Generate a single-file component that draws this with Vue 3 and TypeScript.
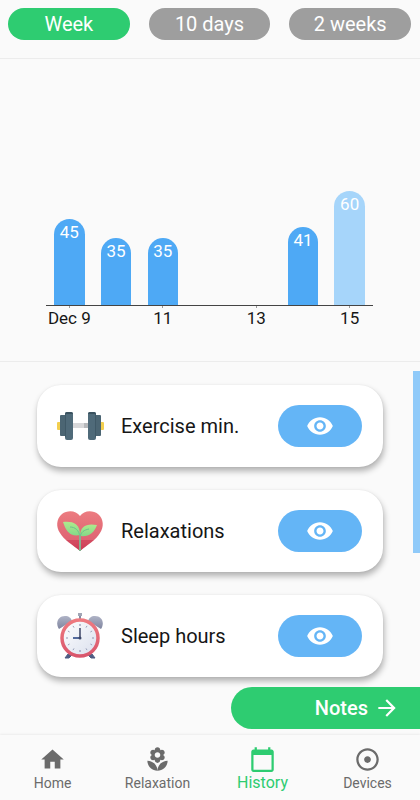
<script setup lang="ts">
import { ref } from 'vue'

interface Day {
  tick: string
  value: number
  today?: boolean
}

const ranges: string[] = ['Week', '10 days', '2 weeks']
const activeRange = ref('Week')

const days: Day[] = [
  { tick: 'Dec 9', value: 45 },
  { tick: '', value: 35 },
  { tick: '11', value: 35 },
  { tick: '', value: 0 },
  { tick: '13', value: 0 },
  { tick: '', value: 41 },
  { tick: '15', value: 60, today: true },
]

const chartMax = 109

const cards = [
  { id: 'exercise', label: 'Exercise min.' },
  { id: 'relax', label: 'Relaxations' },
  { id: 'sleep', label: 'Sleep hours' },
]

const dialTicks = [0, 30, 60, 90, 120, 150, 180, 210, 240, 270, 300, 330]

const tabs = [
  { label: 'Home', path: 'M10 20v-6h4v6h5v-8h3L12 3 2 12h3v8z' },
  {
    label: 'Relaxation',
    path: 'M12 22c4.97 0 9-4.03 9-9-4.97 0-9 4.03-9 9zM5.6 10.25c0 1.38 1.12 2.5 2.5 2.5.53 0 1.01-.16 1.42-.44l-.02.19c0 1.38 1.12 2.5 2.5 2.5s2.5-1.12 2.5-2.5l-.02-.19c.4.28.89.44 1.42.44 1.38 0 2.5-1.12 2.5-2.5 0-1-.59-1.85-1.43-2.25.84-.4 1.43-1.25 1.43-2.25 0-1.38-1.12-2.5-2.5-2.5-.53 0-1.01.16-1.42.44l.02-.19C14.5 2.12 13.38 1 12 1S9.5 2.12 9.5 3.5l.02.19c-.4-.28-.89-.44-1.42-.44-1.38 0-2.5 1.12-2.5 2.5 0 1 .59 1.85 1.43 2.25-.84.4-1.43 1.25-1.43 2.25zM12 5.5c1.38 0 2.5 1.12 2.5 2.5s-1.12 2.5-2.5 2.5S9.5 9.38 9.5 8s1.12-2.5 2.5-2.5zM3 13c0 4.97 4.03 9 9 9 0-4.97-4.03-9-9-9z',
  },
  {
    label: 'History',
    active: true,
    path: 'M20 3h-1V1h-2v2H7V1H5v2H4c-1.1 0-2 .9-2 2v16c0 1.1.9 2 2 2h16c1.1 0 2-.9 2-2V5c0-1.1-.9-2-2-2zm0 18H4V8h16v13z',
  },
  {
    label: 'Devices',
    path: 'M12 2C6.49 2 2 6.49 2 12s4.49 10 10 10 10-4.49 10-10S17.51 2 12 2zm0 18c-4.41 0-8-3.59-8-8s3.59-8 8-8 8 3.59 8 8-3.59 8-8 8zm3-8c0 1.66-1.34 3-3 3s-3-1.34-3-3 1.34-3 3-3 3 1.34 3 3z',
  },
]
</script>

<template>
  <div class="screen">
    <header class="ranges">
      <button
        v-for="range in ranges"
        :key="range"
        type="button"
        class="range"
        :class="{ active: range === activeRange }"
        @click="activeRange = range"
      >
        {{ range }}
      </button>
    </header>

    <section class="chart">
      <div class="plot">
        <div v-for="(day, i) in days" :key="i" class="column">
          <div
            v-if="day.value"
            class="bar"
            :class="{ today: day.today }"
            :style="{ height: (day.value / chartMax) * 100 + '%' }"
          >
            {{ day.value }}
          </div>
        </div>
      </div>
      <div class="axis">
        <span v-for="(day, i) in days" :key="i" class="tick" :class="{ marked: day.tick }">{{ day.tick }}</span>
      </div>
    </section>

    <main class="body">
      <ul class="cards">
        <li v-for="card in cards" :key="card.id" class="card">
          <svg v-if="card.id === 'exercise'" class="art" viewBox="0 0 48 48" aria-hidden="true">
            <rect x="1" y="20" width="5" height="8" rx="1" fill="#f3cf4f" />
            <rect x="43" y="20" width="5" height="8" rx="1" fill="#f3cf4f" />
            <rect x="16" y="21" width="16" height="5" fill="#d8d8da" />
            <rect x="28" y="21" width="4" height="5" fill="#b7b9bc" />
            <rect x="4" y="13" width="7" height="21" rx="1" fill="#4b6573" />
            <rect x="38" y="13" width="7" height="21" rx="1" fill="#4b6573" />
            <rect x="9" y="10" width="8" height="28" rx="2" fill="#4f6a79" />
            <rect x="32" y="10" width="8" height="28" rx="2" fill="#4f6a79" />
            <path d="M9.500 12v23M39.500 12v23" stroke="#3f5967" stroke-width="1" />
            <path d="M11 10h4a2 2 0 0 1 2 2H9a2 2 0 0 1 2-2zM34 10h4a2 2 0 0 1 2 2h-8a2 2 0 0 1 2-2z" fill="#3a525f" />
          </svg>

          <svg v-else-if="card.id === 'relax'" class="art" viewBox="0 0 48 48" aria-hidden="true">
            <defs>
              <linearGradient id="heart" x1="0" y1="0" x2="0" y2="1">
                <stop offset="0" stop-color="#ec7c80" />
                <stop offset="0.8" stop-color="#dd6171" />
                <stop offset="1" stop-color="#cb4159" />
              </linearGradient>
              <linearGradient id="leaf" x1="0" y1="0" x2="0" y2="1">
                <stop offset="0" stop-color="#aeea8d" />
                <stop offset="1" stop-color="#84d988" />
              </linearGradient>
            </defs>
            <path d="M24 9C20 3 11 3 6 7c-6 5-6 13-2 19 4 7 13 12 20 18 7-6 16-11 20-18 4-6 4-14-2-19-5-4-14-4-18 2z" fill="url(#heart)" />
            <path d="M10 33h28c-5 4-10 7-14 11-4-4-9-7-14-11z" fill="#c8324e" opacity="0.5" />
            <path d="M7 15c9-1 17 1 17 13-10 2-14-4-17-13z" fill="url(#leaf)" />
            <path d="M41 18c-10-2-17 1-17 11 9 1 14-3 17-11z" fill="url(#leaf)" />
            <path d="M14 20c5 0 9 3 10 10 1-5 4-7 9-8" fill="none" stroke="#6cc28d" stroke-width="1" />
            <path d="M24 28v16" stroke="#86b08f" stroke-width="2" />
          </svg>

          <svg v-else class="art" viewBox="0 0 48 48" aria-hidden="true">
            <defs>
              <linearGradient id="bell" x1="0" y1="0" x2="0" y2="1">
                <stop offset="0" stop-color="#afb3c6" />
                <stop offset="1" stop-color="#7f859f" />
              </linearGradient>
              <linearGradient id="rim" x1="0" y1="0" x2="0" y2="1">
                <stop offset="0" stop-color="#ee7a80" />
                <stop offset="1" stop-color="#d9566c" />
              </linearGradient>
              <linearGradient id="dial" x1="0" y1="0" x2="1" y2="1">
                <stop offset="0" stop-color="#ffffff" />
                <stop offset="1" stop-color="#d9dfed" />
              </linearGradient>
            </defs>
            <path d="M12 42l-3 4h4l3-3zM36 42l3 4h-4l-3-3z" fill="#4f5d83" stroke="#4f5d83" />
            <path d="M3 17C-1 11 2 4 9 4c4 0 6 2 7 5z" fill="url(#bell)" />
            <path d="M45 17c4-6 1-13-6-13-4 0-6 2-7 5z" fill="url(#bell)" />
            <path d="M24 3v6" stroke="#858aa2" stroke-width="2" />
            <rect x="22" y="1" width="4" height="3" fill="#a2a6b6" />
            <circle cx="24" cy="26" r="18" fill="url(#dial)" stroke="url(#rim)" stroke-width="3.5" />
            <path
              v-for="angle in dialTicks"
              :key="angle"
              d="M24 12v2"
              stroke="#8f96b2"
              :stroke-width="angle % 90 === 0 ? 1.2 : 0.8"
              :transform="`rotate(${angle} 24 26)`"
            />
            <path d="M24 26V16" stroke="#47506f" stroke-width="1.6" />
            <path d="M24 26h-7" stroke="#2e4a86" stroke-width="1.6" />
            <circle cx="24" cy="26" r="1.5" fill="#3c4668" />
          </svg>

          <span class="name">{{ card.label }}</span>
          <button type="button" class="view" :aria-label="'Show ' + card.label">
            <svg class="eye" viewBox="0 0 24 24" aria-hidden="true">
              <path d="M12 4.5C7 4.5 2.73 7.61 1 12c1.73 4.39 6 7.5 11 7.5s9.27-3.11 11-7.5c-1.73-4.39-6-7.5-11-7.5zM12 17c-2.76 0-5-2.24-5-5s2.24-5 5-5 5 2.24 5 5-2.24 5-5 5zm0-8c-1.66 0-3 1.34-3 3s1.34 3 3 3 3-1.34 3-3-1.34-3-3-3z" />
            </svg>
          </button>
        </li>
      </ul>
      <div class="scroll-thumb"></div>
      <button type="button" class="notes">
        Notes
        <svg class="arrow" viewBox="0 0 24 24" aria-hidden="true">
          <path d="M12 4l-1.41 1.41L16.17 11H4v2h12.17l-5.58 5.59L12 20l8-8z" />
        </svg>
      </button>
    </main>

    <nav class="tabs">
      <a v-for="tab in tabs" :key="tab.label" href="#" class="tab" :class="{ active: tab.active }">
        <svg class="tab-icon" viewBox="0 0 24 24" aria-hidden="true"><path :d="tab.path" /></svg>
        <span>{{ tab.label }}</span>
      </a>
    </nav>
  </div>
</template>

<style>
body {
  background: #fafafa;
}
</style>

<style scoped>
.screen {
  display: flex;
  flex-direction: column;
  min-height: 100vh;
  background: #fafafa;
  color: #161616;
  font-family: Roboto, 'Liberation Sans', sans-serif;
}

button {
  border: 0;
  padding: 0;
  font-family: inherit;
  cursor: pointer;
}

.ranges {
  display: flex;
  gap: 19px;
  padding: 8px 9px 18px 8px;
  border-bottom: 1px solid #ececec;
}

.range {
  flex: 1;
  height: 32px;
  border-radius: 16px;
  background: #9e9e9e;
  color: #fff;
  font-size: 20px;
  line-height: 32px;
}

.range.active {
  background: #2ecc71;
}

.chart {
  padding: 38px 47px 33px 46px;
  border-bottom: 1px solid #ececec;
}

.plot {
  display: flex;
  height: 208px;
  border-bottom: 1px solid #444;
}

.column {
  flex: 1;
  display: flex;
  align-items: flex-end;
  justify-content: center;
}

.bar {
  box-sizing: border-box;
  width: 65%;
  padding-top: 3px;
  border-radius: 16px 16px 0 0;
  background: #4ea9f5;
  color: #fff;
  font-size: 17px;
  line-height: 20px;
  text-align: center;
}

.bar.today {
  background: #a6d5fa;
}

.axis {
  display: flex;
}

.tick {
  flex: 1;
  display: flex;
  flex-direction: column;
  align-items: center;
  height: 22px;
  font-size: 17px;
  line-height: 20px;
  white-space: nowrap;
}

.tick.marked::before {
  content: '';
  width: 1px;
  height: 2px;
  background: #999;
}

.body {
  position: relative;
  flex: 1;
}

.cards {
  display: flex;
  flex-direction: column;
  gap: 23px;
  margin: 0;
  padding: 23px 37px 58px;
  list-style: none;
}

.card {
  display: flex;
  align-items: center;
  box-sizing: border-box;
  height: 82px;
  padding: 0 21px 0 19px;
  border-radius: 24px;
  background: #fff;
  box-shadow: 1px 4px 6px rgba(0, 0, 0, 0.3), 0 0 2px rgba(0, 0, 0, 0.06);
}

.art {
  width: 48px;
  height: 48px;
  flex: none;
}

.name {
  flex: 1;
  margin-left: 17px;
  font-size: 20px;
  line-height: 24px;
}

.view {
  display: flex;
  align-items: center;
  justify-content: center;
  width: 84px;
  height: 42px;
  border-radius: 21px;
  background: #64b5f6;
}

.eye {
  width: 28px;
  height: 28px;
  fill: #fff;
}

.scroll-thumb {
  position: absolute;
  top: 9px;
  right: 0;
  width: 7px;
  height: 182px;
  background: #90caf9;
}

.notes {
  position: absolute;
  right: 0;
  bottom: 6px;
  display: flex;
  align-items: center;
  justify-content: flex-end;
  gap: 6px;
  width: 45%;
  height: 42px;
  padding-right: 20px;
  border-radius: 21px 0 0 21px;
  background: #2ecc71;
  color: #fff;
  font-size: 20px;
  font-weight: 500;
  line-height: 24px;
}

.arrow {
  width: 26px;
  height: 26px;
  fill: #fff;
}

.tabs {
  display: flex;
  height: 65px;
  background: #fafafa;
  box-shadow: 0 -1px 2px rgba(0, 0, 0, 0.06);
}

.tab {
  flex: 1;
  display: flex;
  flex-direction: column;
  align-items: center;
  padding-top: 11px;
  color: #6b6b6b;
  font-size: 14px;
  line-height: 20px;
  text-decoration: none;
}

.tab.active {
  color: #2ecc71;
  font-size: 16px;
}

.tab-icon {
  width: 27px;
  height: 27px;
  fill: currentColor;
}
</style>
